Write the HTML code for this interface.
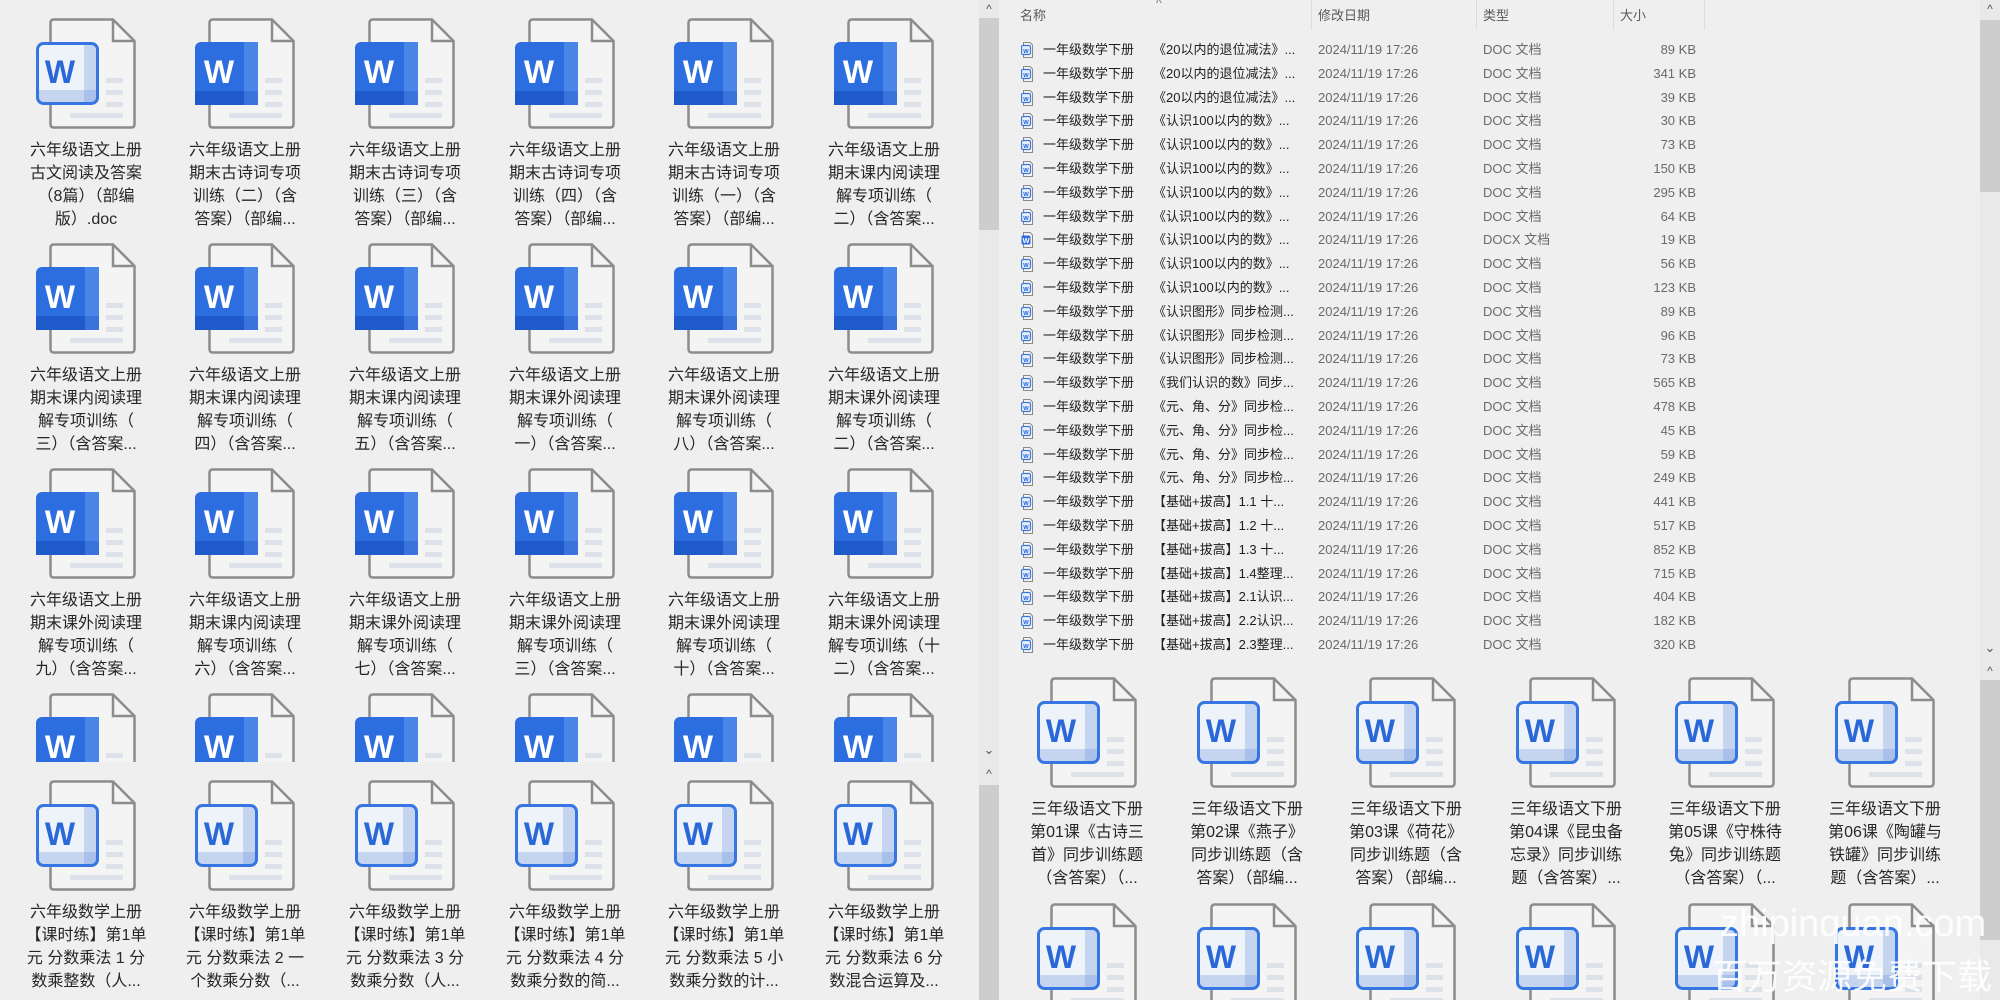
<!DOCTYPE html>
<html style="overflow:hidden;height:1000px"><head><meta charset="utf-8">
<style>
*{margin:0;padding:0;box-sizing:border-box}
body{width:2000px;height:1000px;background:#efefef;position:relative;overflow:hidden;font-family:"Liberation Sans","Noto Sans CJK SC",sans-serif;color:#262626}
.box{position:absolute;overflow:hidden}
.it{position:absolute;width:160px;height:230px}
.it svg{position:absolute;left:30px;top:0}
.it .t{position:absolute;top:121px;left:0;width:160px;text-align:center;font-size:16px;line-height:23px;white-space:nowrap}
.sb{position:absolute;background:#e9e9e9;width:20px}
.th{position:absolute;background:#cdcdcd;width:20px}
.ar{position:absolute;width:20px;text-align:center;font-size:12px;color:#555;line-height:12px}
.row{position:absolute;left:0;height:24px;font-size:13px;line-height:24px;white-space:nowrap;width:980px}
.row span{position:absolute}
.row .a{left:43px;color:#1e1e1e}
.row .b{left:153px;color:#1e1e1e}
.row .d{left:318px;color:#6a6a6a}
.row .e{left:483px;color:#6a6a6a}
.row .f{left:600px;width:96px;text-align:right;color:#6a6a6a}
.row svg{position:absolute;left:21px;top:4px}
.hd{position:absolute;top:5px;font-size:13px;color:#5a5a5a}
.sep{position:absolute;top:0;width:1px;height:30px;background:#dcdcdc}
.wm{position:absolute;color:#fff;white-space:nowrap;opacity:.92}
</style></head><body>
<svg width="0" height="0" style="position:absolute">
<defs>
<g id="pg">
<path d="M18,1.5 H77 L98.5,23 V106 Q98.5,109.5 95,109.5 H18 Q14.5,109.5 14.5,106 V5 Q14.5,1.5 18,1.5 Z" fill="#f4f4f4" stroke="#8c8c8c" stroke-width="2.5"/>
<path d="M77,1.5 V23 H98.5" fill="none" stroke="#8c8c8c" stroke-width="2.5"/>
<rect x="70" y="60" width="17" height="5" fill="#dde2ea"/>
<rect x="70" y="72" width="17" height="5" fill="#dde2ea"/>
<rect x="70" y="84" width="17" height="5" fill="#dde2ea"/>
<rect x="34" y="95" width="53" height="5" fill="#dde2ea"/>
</g>
<g id="wf">
<use href="#pg"/>
<rect x="0" y="24" width="63" height="63" rx="6" fill="#2c6ddf"/>
<rect x="49" y="24" width="14" height="63" fill="#4a85e8"/>
<rect x="0" y="73" width="63" height="14" fill="#1f5acb"/>
<rect x="49" y="73" width="14" height="14" fill="#3a73dc"/>
<text x="24" y="65" font-family="Liberation Sans" font-weight="bold" font-size="32" fill="#fff" text-anchor="middle">W</text>
</g>
<g id="wo">
<use href="#pg"/>
<rect x="1.5" y="25.5" width="60" height="60" rx="6" fill="#eef2f9"/>
<rect x="48" y="27" width="12" height="57" fill="#c6d5ef"/>
<rect x="3" y="72" width="57" height="12" fill="#c6d5ef"/>
<rect x="48" y="72" width="12" height="12" fill="#a9c0ea"/>
<rect x="1.5" y="25.5" width="60" height="60" rx="6" fill="none" stroke="#3676e2" stroke-width="3"/>
<text x="24" y="65" font-family="Liberation Sans" font-weight="bold" font-size="32" fill="#2a68d8" text-anchor="middle">W</text>
</g>
<g id="si">
<path d="M2.5,.5 H9 L11.5,3 V15.5 H2.5 Z" fill="#f4f4f4" stroke="#888" stroke-width="1"/>
<rect x=".5" y="3.5" width="9" height="9" rx="1.5" fill="#e6eefb" stroke="#3a78e0" stroke-width="1.2"/>
<text x="5" y="11" font-family="Liberation Sans" font-weight="bold" font-size="7" fill="#2a68d8" text-anchor="middle">w</text>
</g>
<g id="sf">
<path d="M2.5,.5 H9 L11.5,3 V15.5 H2.5 Z" fill="#f4f4f4" stroke="#888" stroke-width="1"/>
<rect x=".5" y="3.5" width="9" height="9" rx="1.5" fill="#2c6ddf"/>
<text x="5" y="11" font-family="Liberation Sans" font-weight="bold" font-size="7.5" fill="#fff" text-anchor="middle">W</text>
</g>
</defs></svg>

<!-- LEFT UPPER -->
<div class="box" style="left:0;top:0;width:979px;height:762px">
<div class="it" style="left:6px;top:18px"><svg width="100" height="112"><use href="#wo"/></svg><div class="t">六年级语文上册<br>古文阅读及答案<br>（8篇）（部编<br>版）.doc</div></div>
<div class="it" style="left:165px;top:18px"><svg width="100" height="112"><use href="#wf"/></svg><div class="t">六年级语文上册<br>期末古诗词专项<br>训练（二）（含<br>答案）（部编...</div></div>
<div class="it" style="left:325px;top:18px"><svg width="100" height="112"><use href="#wf"/></svg><div class="t">六年级语文上册<br>期末古诗词专项<br>训练（三）（含<br>答案）（部编...</div></div>
<div class="it" style="left:485px;top:18px"><svg width="100" height="112"><use href="#wf"/></svg><div class="t">六年级语文上册<br>期末古诗词专项<br>训练（四）（含<br>答案）（部编...</div></div>
<div class="it" style="left:644px;top:18px"><svg width="100" height="112"><use href="#wf"/></svg><div class="t">六年级语文上册<br>期末古诗词专项<br>训练（一）（含<br>答案）（部编...</div></div>
<div class="it" style="left:804px;top:18px"><svg width="100" height="112"><use href="#wf"/></svg><div class="t">六年级语文上册<br>期末课内阅读理<br>解专项训练（<br>二）（含答案...</div></div>

<div class="it" style="left:6px;top:243px"><svg width="100" height="112"><use href="#wf"/></svg><div class="t">六年级语文上册<br>期末课内阅读理<br>解专项训练（<br>三）（含答案...</div></div>
<div class="it" style="left:165px;top:243px"><svg width="100" height="112"><use href="#wf"/></svg><div class="t">六年级语文上册<br>期末课内阅读理<br>解专项训练（<br>四）（含答案...</div></div>
<div class="it" style="left:325px;top:243px"><svg width="100" height="112"><use href="#wf"/></svg><div class="t">六年级语文上册<br>期末课内阅读理<br>解专项训练（<br>五）（含答案...</div></div>
<div class="it" style="left:485px;top:243px"><svg width="100" height="112"><use href="#wf"/></svg><div class="t">六年级语文上册<br>期末课外阅读理<br>解专项训练（<br>一）（含答案...</div></div>
<div class="it" style="left:644px;top:243px"><svg width="100" height="112"><use href="#wf"/></svg><div class="t">六年级语文上册<br>期末课外阅读理<br>解专项训练（<br>八）（含答案...</div></div>
<div class="it" style="left:804px;top:243px"><svg width="100" height="112"><use href="#wf"/></svg><div class="t">六年级语文上册<br>期末课外阅读理<br>解专项训练（<br>二）（含答案...</div></div>

<div class="it" style="left:6px;top:468px"><svg width="100" height="112"><use href="#wf"/></svg><div class="t">六年级语文上册<br>期末课外阅读理<br>解专项训练（<br>九）（含答案...</div></div>
<div class="it" style="left:165px;top:468px"><svg width="100" height="112"><use href="#wf"/></svg><div class="t">六年级语文上册<br>期末课内阅读理<br>解专项训练（<br>六）（含答案...</div></div>
<div class="it" style="left:325px;top:468px"><svg width="100" height="112"><use href="#wf"/></svg><div class="t">六年级语文上册<br>期末课外阅读理<br>解专项训练（<br>七）（含答案...</div></div>
<div class="it" style="left:485px;top:468px"><svg width="100" height="112"><use href="#wf"/></svg><div class="t">六年级语文上册<br>期末课外阅读理<br>解专项训练（<br>三）（含答案...</div></div>
<div class="it" style="left:644px;top:468px"><svg width="100" height="112"><use href="#wf"/></svg><div class="t">六年级语文上册<br>期末课外阅读理<br>解专项训练（<br>十）（含答案...</div></div>
<div class="it" style="left:804px;top:468px"><svg width="100" height="112"><use href="#wf"/></svg><div class="t">六年级语文上册<br>期末课外阅读理<br>解专项训练（十<br>二）（含答案...</div></div>

<div class="it" style="left:6px;top:693px;height:69px"><svg width="100" height="112"><use href="#wf"/></svg></div>
<div class="it" style="left:165px;top:693px;height:69px"><svg width="100" height="112"><use href="#wf"/></svg></div>
<div class="it" style="left:325px;top:693px;height:69px"><svg width="100" height="112"><use href="#wf"/></svg></div>
<div class="it" style="left:485px;top:693px;height:69px"><svg width="100" height="112"><use href="#wf"/></svg></div>
<div class="it" style="left:644px;top:693px;height:69px"><svg width="100" height="112"><use href="#wf"/></svg></div>
<div class="it" style="left:804px;top:693px;height:69px"><svg width="100" height="112"><use href="#wf"/></svg></div>
</div>

<!-- LEFT LOWER -->
<div class="box" style="left:0;top:762px;width:979px;height:238px">
<div class="it" style="left:6px;top:18px;height:220px"><svg width="100" height="112"><use href="#wo"/></svg><div class="t">六年级数学上册<br>【课时练】第1单<br>元 分数乘法 1 分<br>数乘整数（人...</div></div>
<div class="it" style="left:165px;top:18px;height:220px"><svg width="100" height="112"><use href="#wo"/></svg><div class="t">六年级数学上册<br>【课时练】第1单<br>元 分数乘法 2 一<br>个数乘分数（...</div></div>
<div class="it" style="left:325px;top:18px;height:220px"><svg width="100" height="112"><use href="#wo"/></svg><div class="t">六年级数学上册<br>【课时练】第1单<br>元 分数乘法 3 分<br>数乘分数（人...</div></div>
<div class="it" style="left:485px;top:18px;height:220px"><svg width="100" height="112"><use href="#wo"/></svg><div class="t">六年级数学上册<br>【课时练】第1单<br>元 分数乘法 4 分<br>数乘分数的简...</div></div>
<div class="it" style="left:644px;top:18px;height:220px"><svg width="100" height="112"><use href="#wo"/></svg><div class="t">六年级数学上册<br>【课时练】第1单<br>元 分数乘法 5 小<br>数乘分数的计...</div></div>
<div class="it" style="left:804px;top:18px;height:220px"><svg width="100" height="112"><use href="#wo"/></svg><div class="t">六年级数学上册<br>【课时练】第1单<br>元 分数乘法 6 分<br>数混合运算及...</div></div>
</div>

<!-- left scrollbars -->
<div class="sb" style="left:979px;top:0;height:740px"></div>
<div class="ar" style="left:979px;top:3px">&#94;</div>
<div class="th" style="left:979px;top:18px;height:212px"></div>
<div class="sb" style="left:979px;top:740px;height:45px"></div>
<div class="ar" style="left:979px;top:744px;font-size:13px">&#8964;</div>
<div class="ar" style="left:979px;top:768px">&#94;</div>
<div class="th" style="left:979px;top:785px;height:215px"></div>

<!-- RIGHT LIST -->
<div class="box" style="left:1000px;top:0;width:980px;height:663px">
<div class="hd" style="left:20px">名称</div>
<div style="position:absolute;left:156px;top:-4px;font-size:12px;color:#777">&#94;</div>
<div class="sep" style="left:311px"></div>
<div class="hd" style="left:318px">修改日期</div>
<div class="sep" style="left:476px"></div>
<div class="hd" style="left:483px">类型</div>
<div class="sep" style="left:613px"></div>
<div class="hd" style="left:620px">大小</div>
<div class="sep" style="left:704px"></div>

<div class="row" style="top:38px"><svg width="12" height="16"><use href="#si"/></svg><span class="a">一年级数学下册</span><span class="b">《20以内的退位减法》...</span><span class="d">2024/11/19 17:26</span><span class="e">DOC 文档</span><span class="f">89 KB</span></div>
<div class="row" style="top:62px"><svg width="12" height="16"><use href="#si"/></svg><span class="a">一年级数学下册</span><span class="b">《20以内的退位减法》...</span><span class="d">2024/11/19 17:26</span><span class="e">DOC 文档</span><span class="f">341 KB</span></div>
<div class="row" style="top:86px"><svg width="12" height="16"><use href="#si"/></svg><span class="a">一年级数学下册</span><span class="b">《20以内的退位减法》...</span><span class="d">2024/11/19 17:26</span><span class="e">DOC 文档</span><span class="f">39 KB</span></div>
<div class="row" style="top:109px"><svg width="12" height="16"><use href="#si"/></svg><span class="a">一年级数学下册</span><span class="b">《认识100以内的数》...</span><span class="d">2024/11/19 17:26</span><span class="e">DOC 文档</span><span class="f">30 KB</span></div>
<div class="row" style="top:133px"><svg width="12" height="16"><use href="#si"/></svg><span class="a">一年级数学下册</span><span class="b">《认识100以内的数》...</span><span class="d">2024/11/19 17:26</span><span class="e">DOC 文档</span><span class="f">73 KB</span></div>
<div class="row" style="top:157px"><svg width="12" height="16"><use href="#si"/></svg><span class="a">一年级数学下册</span><span class="b">《认识100以内的数》...</span><span class="d">2024/11/19 17:26</span><span class="e">DOC 文档</span><span class="f">150 KB</span></div>
<div class="row" style="top:181px"><svg width="12" height="16"><use href="#si"/></svg><span class="a">一年级数学下册</span><span class="b">《认识100以内的数》...</span><span class="d">2024/11/19 17:26</span><span class="e">DOC 文档</span><span class="f">295 KB</span></div>
<div class="row" style="top:205px"><svg width="12" height="16"><use href="#si"/></svg><span class="a">一年级数学下册</span><span class="b">《认识100以内的数》...</span><span class="d">2024/11/19 17:26</span><span class="e">DOC 文档</span><span class="f">64 KB</span></div>
<div class="row" style="top:228px"><svg width="12" height="16"><use href="#sf"/></svg><span class="a">一年级数学下册</span><span class="b">《认识100以内的数》...</span><span class="d">2024/11/19 17:26</span><span class="e">DOCX 文档</span><span class="f">19 KB</span></div>
<div class="row" style="top:252px"><svg width="12" height="16"><use href="#si"/></svg><span class="a">一年级数学下册</span><span class="b">《认识100以内的数》...</span><span class="d">2024/11/19 17:26</span><span class="e">DOC 文档</span><span class="f">56 KB</span></div>
<div class="row" style="top:276px"><svg width="12" height="16"><use href="#si"/></svg><span class="a">一年级数学下册</span><span class="b">《认识100以内的数》...</span><span class="d">2024/11/19 17:26</span><span class="e">DOC 文档</span><span class="f">123 KB</span></div>
<div class="row" style="top:300px"><svg width="12" height="16"><use href="#si"/></svg><span class="a">一年级数学下册</span><span class="b">《认识图形》同步检测...</span><span class="d">2024/11/19 17:26</span><span class="e">DOC 文档</span><span class="f">89 KB</span></div>
<div class="row" style="top:324px"><svg width="12" height="16"><use href="#si"/></svg><span class="a">一年级数学下册</span><span class="b">《认识图形》同步检测...</span><span class="d">2024/11/19 17:26</span><span class="e">DOC 文档</span><span class="f">96 KB</span></div>
<div class="row" style="top:347px"><svg width="12" height="16"><use href="#si"/></svg><span class="a">一年级数学下册</span><span class="b">《认识图形》同步检测...</span><span class="d">2024/11/19 17:26</span><span class="e">DOC 文档</span><span class="f">73 KB</span></div>
<div class="row" style="top:371px"><svg width="12" height="16"><use href="#si"/></svg><span class="a">一年级数学下册</span><span class="b">《我们认识的数》同步...</span><span class="d">2024/11/19 17:26</span><span class="e">DOC 文档</span><span class="f">565 KB</span></div>
<div class="row" style="top:395px"><svg width="12" height="16"><use href="#si"/></svg><span class="a">一年级数学下册</span><span class="b">《元、角、分》同步检...</span><span class="d">2024/11/19 17:26</span><span class="e">DOC 文档</span><span class="f">478 KB</span></div>
<div class="row" style="top:419px"><svg width="12" height="16"><use href="#si"/></svg><span class="a">一年级数学下册</span><span class="b">《元、角、分》同步检...</span><span class="d">2024/11/19 17:26</span><span class="e">DOC 文档</span><span class="f">45 KB</span></div>
<div class="row" style="top:443px"><svg width="12" height="16"><use href="#si"/></svg><span class="a">一年级数学下册</span><span class="b">《元、角、分》同步检...</span><span class="d">2024/11/19 17:26</span><span class="e">DOC 文档</span><span class="f">59 KB</span></div>
<div class="row" style="top:466px"><svg width="12" height="16"><use href="#si"/></svg><span class="a">一年级数学下册</span><span class="b">《元、角、分》同步检...</span><span class="d">2024/11/19 17:26</span><span class="e">DOC 文档</span><span class="f">249 KB</span></div>
<div class="row" style="top:490px"><svg width="12" height="16"><use href="#si"/></svg><span class="a">一年级数学下册</span><span class="b">【基础+拔高】1.1 十...</span><span class="d">2024/11/19 17:26</span><span class="e">DOC 文档</span><span class="f">441 KB</span></div>
<div class="row" style="top:514px"><svg width="12" height="16"><use href="#si"/></svg><span class="a">一年级数学下册</span><span class="b">【基础+拔高】1.2 十...</span><span class="d">2024/11/19 17:26</span><span class="e">DOC 文档</span><span class="f">517 KB</span></div>
<div class="row" style="top:538px"><svg width="12" height="16"><use href="#si"/></svg><span class="a">一年级数学下册</span><span class="b">【基础+拔高】1.3 十...</span><span class="d">2024/11/19 17:26</span><span class="e">DOC 文档</span><span class="f">852 KB</span></div>
<div class="row" style="top:562px"><svg width="12" height="16"><use href="#si"/></svg><span class="a">一年级数学下册</span><span class="b">【基础+拔高】1.4整理...</span><span class="d">2024/11/19 17:26</span><span class="e">DOC 文档</span><span class="f">715 KB</span></div>
<div class="row" style="top:585px"><svg width="12" height="16"><use href="#si"/></svg><span class="a">一年级数学下册</span><span class="b">【基础+拔高】2.1认识...</span><span class="d">2024/11/19 17:26</span><span class="e">DOC 文档</span><span class="f">404 KB</span></div>
<div class="row" style="top:609px"><svg width="12" height="16"><use href="#si"/></svg><span class="a">一年级数学下册</span><span class="b">【基础+拔高】2.2认识...</span><span class="d">2024/11/19 17:26</span><span class="e">DOC 文档</span><span class="f">182 KB</span></div>
<div class="row" style="top:633px"><svg width="12" height="16"><use href="#si"/></svg><span class="a">一年级数学下册</span><span class="b">【基础+拔高】2.3整理...</span><span class="d">2024/11/19 17:26</span><span class="e">DOC 文档</span><span class="f">320 KB</span></div>
</div>

<!-- RIGHT LOWER GRID -->
<div class="box" style="left:1000px;top:663px;width:980px;height:337px">
<div class="it" style="left:7px;top:14px"><svg width="100" height="112"><use href="#wo"/></svg><div class="t">三年级语文下册<br>第01课《古诗三<br>首》同步训练题<br>（含答案）（...</div></div>
<div class="it" style="left:167px;top:14px"><svg width="100" height="112"><use href="#wo"/></svg><div class="t">三年级语文下册<br>第02课《燕子》<br>同步训练题（含<br>答案）（部编...</div></div>
<div class="it" style="left:326px;top:14px"><svg width="100" height="112"><use href="#wo"/></svg><div class="t">三年级语文下册<br>第03课《荷花》<br>同步训练题（含<br>答案）（部编...</div></div>
<div class="it" style="left:486px;top:14px"><svg width="100" height="112"><use href="#wo"/></svg><div class="t">三年级语文下册<br>第04课《昆虫备<br>忘录》同步训练<br>题（含答案）...</div></div>
<div class="it" style="left:645px;top:14px"><svg width="100" height="112"><use href="#wo"/></svg><div class="t">三年级语文下册<br>第05课《守株待<br>兔》同步训练题<br>（含答案）（...</div></div>
<div class="it" style="left:805px;top:14px"><svg width="100" height="112"><use href="#wo"/></svg><div class="t">三年级语文下册<br>第06课《陶罐与<br>铁罐》同步训练<br>题（含答案）...</div></div>
<div class="it" style="left:7px;top:240px;height:97px"><svg width="100" height="112"><use href="#wo"/></svg></div>
<div class="it" style="left:167px;top:240px;height:97px"><svg width="100" height="112"><use href="#wo"/></svg></div>
<div class="it" style="left:326px;top:240px;height:97px"><svg width="100" height="112"><use href="#wo"/></svg></div>
<div class="it" style="left:486px;top:240px;height:97px"><svg width="100" height="112"><use href="#wo"/></svg></div>
<div class="it" style="left:645px;top:240px;height:97px"><svg width="100" height="112"><use href="#wo"/></svg></div>
<div class="it" style="left:805px;top:240px;height:97px"><svg width="100" height="112"><use href="#wo"/></svg></div>
</div>

<!-- right scrollbars -->
<div class="sb" style="left:1980px;top:0;height:680px"></div>
<div class="ar" style="left:1980px;top:3px">&#94;</div>
<div class="th" style="left:1980px;top:20px;height:172px"></div>
<div class="ar" style="left:1980px;top:642px;font-size:13px">&#8964;</div>
<div class="ar" style="left:1980px;top:665px">&#94;</div>
<div class="th" style="left:1980px;top:680px;height:260px"></div>
<div class="sb" style="left:1980px;top:940px;height:60px"></div>

<!-- watermark -->
<div class="wm" style="left:1720px;top:902px;font-size:38px;line-height:44px;font-family:'Liberation Sans',sans-serif">zhipinquan.com</div>
<div class="wm" style="left:1712px;top:952px;font-size:35px;font-family:'Noto Sans CJK SC',sans-serif;line-height:46px">百万资源免费下载</div>
</body></html>
